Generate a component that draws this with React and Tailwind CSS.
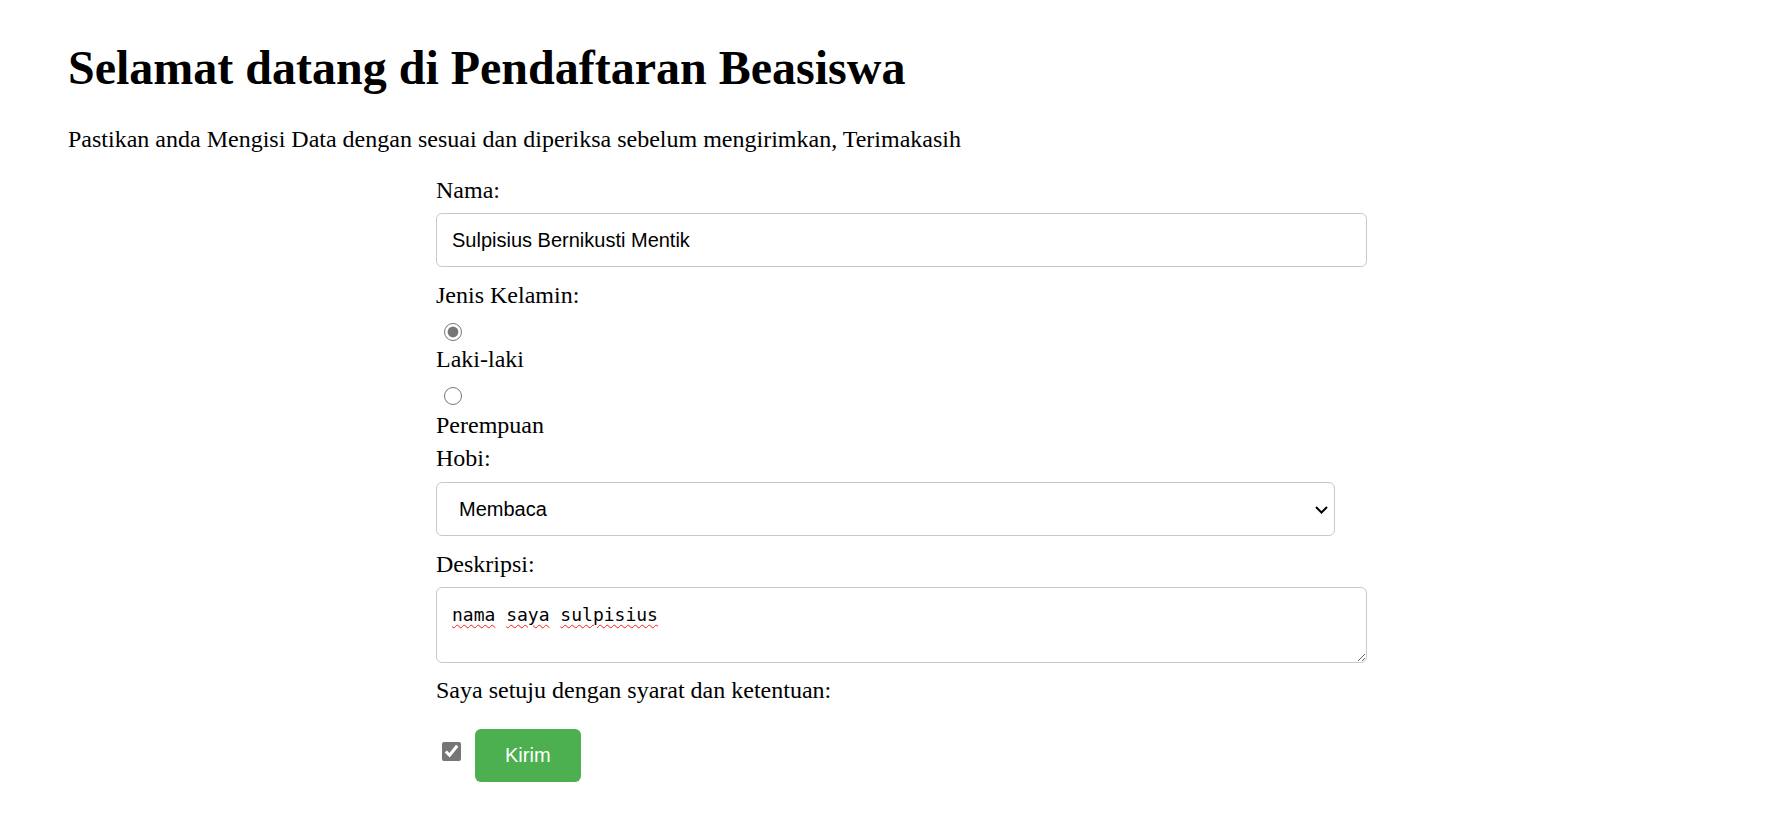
import React from "react";

function Squiggle({ children }) {
  return (
    <span className="underline decoration-wavy decoration-[#ff1a1a] decoration-1 underline-offset-[3px]">
      {children}
    </span>
  );
}

export default function App() {
  const words = ["nama", "saya", "sulpisius"];
  return (
    <div className="min-h-screen bg-white text-black font-['Liberation_Serif',serif] pl-[68px] pt-[40px]">
      <h1 className="text-[48px] leading-[55px] font-bold">Selamat datang di Pendaftaran Beasiswa</h1>
      <p className="mt-[30px] text-[24px] leading-[28px]">
        Pastikan anda Mengisi Data dengan sesuai dan diperiksa sebelum mengirimkan, Terimakasih
      </p>

      <form className="ml-[368px] w-[931px] flex flex-col items-start text-[24px] leading-[28px]" onSubmit={(e) => e.preventDefault()}>
        <label className="mt-[23px] block" htmlFor="nama">Nama:</label>
        <input
          id="nama"
          type="text"
          defaultValue="Sulpisius Bernikusti Mentik"
          className="mt-[9px] w-[931px] h-[54px] px-[15px] border border-[#c8c8c8] rounded-[6px] bg-white text-black font-['Liberation_Sans',Arial,sans-serif] text-[20px] outline-none"
        />

        <label className="mt-[14px] block">Jenis Kelamin:</label>
        <input
          type="radio"
          name="jk"
          defaultChecked
          className="block mt-[14px] ml-[8px] w-[18px] h-[18px] accent-[#767676]"
        />
        <label className="mt-[4px] block">Laki-laki</label>
        <input
          type="radio"
          name="jk"
          className="block mt-[14px] ml-[8px] w-[18px] h-[18px] accent-[#767676]"
        />
        <label className="mt-[6px] block">Perempuan</label>

        <label className="mt-[5px] block" htmlFor="hobi">Hobi:</label>
        <div className="relative mt-[10px] w-[899px]">
          <select
            id="hobi"
            defaultValue="Membaca"
            className="appearance-none w-[899px] h-[54px] pl-[22px] pr-[30px] border border-[#c8c8c8] rounded-[6px] bg-white text-black font-['Liberation_Sans',Arial,sans-serif] text-[20px] outline-none"
          >
            <option>Membaca</option>
            <option>Menulis</option>
            <option>Olahraga</option>
          </select>
          <svg
            className="pointer-events-none absolute right-[7px] top-[24px] w-[13px] h-[8px]"
            viewBox="0 0 13 8"
            fill="none"
            stroke="#000"
            strokeWidth="2"
          >
            <path d="M1 1 L6.5 6.5 L12 1" />
          </svg>
        </div>

        <label className="mt-[14px] block" htmlFor="desk">Deskripsi:</label>
        <div className="relative mt-[9px] w-[931px] h-[76px]">
          <textarea
            id="desk"
            spellCheck={false}
            defaultValue="nama saya sulpisius"
            className="block w-[931px] h-[76px] px-[15px] pt-[16px] pb-[14px] border border-[#c8c8c8] rounded-[6px] bg-white text-black font-['DejaVu_Sans_Mono',monospace] text-[18px] leading-[21px] outline-none resize"
          />
          <div className="pointer-events-none absolute left-[16px] top-[17px] font-['DejaVu_Sans_Mono',monospace] text-[18px] leading-[21px] text-transparent whitespace-pre">
            {words.map((w, i) => (
              <React.Fragment key={w}>
                {i > 0 ? " " : ""}
                <Squiggle>{w}</Squiggle>
              </React.Fragment>
            ))}
          </div>
        </div>

        <label className="mt-[13px] block" htmlFor="setuju">Saya setuju dengan syarat dan ketentuan:</label>
        <div className="mt-[25px] flex items-start">
          <input
            id="setuju"
            type="checkbox"
            defaultChecked
            className="mt-[13px] ml-[6px] w-[19px] h-[19px] accent-[#767676]"
          />
          <button
            type="submit"
            className="ml-[14px] h-[53px] px-[30px] rounded-[6px] bg-[#4caf50] text-white font-['Liberation_Sans',Arial,sans-serif] text-[20px] leading-[23px]"
          >
            Kirim
          </button>
        </div>
      </form>
    </div>
  );
}
